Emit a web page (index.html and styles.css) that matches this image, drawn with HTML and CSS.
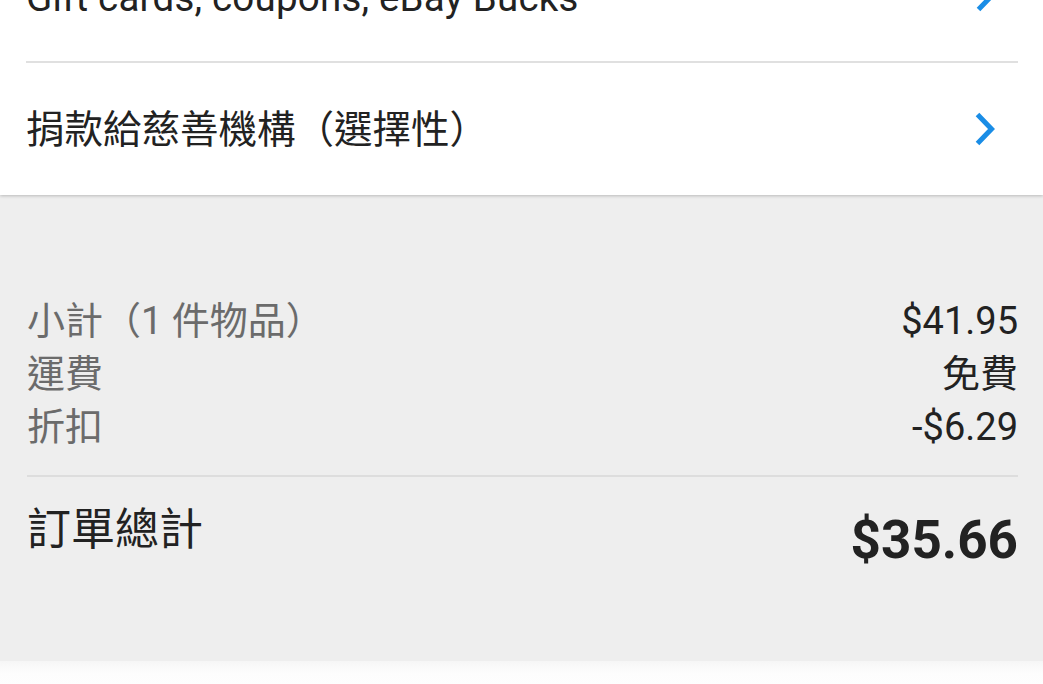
FILE: index.html
```html
<!DOCTYPE html>
<html lang="zh-Hant">
<head>
<meta charset="utf-8">
<link rel="stylesheet" href="styles.css">
</head>
<body>
<div class="card">
  <div class="row row-first">
    <span class="row-text row-text-first">Gift cards, coupons, eBay Bucks</span>
    <svg class="chev" viewBox="0 0 20 34" width="20" height="34"><path d="M2.5 2.5 L16.5 17 L2.5 31.5" fill="none" stroke="#1a8de6" stroke-width="5"/></svg>
  </div>
  <div class="row">
    <span class="row-text">捐款給慈善機構（選擇性）</span>
    <svg class="chev" viewBox="0 0 20 34" width="20" height="34"><path d="M2.5 2.5 L16.5 17 L2.5 31.5" fill="none" stroke="#1a8de6" stroke-width="5"/></svg>
  </div>
</div>
<div class="summary">
  <div class="lines">
    <div class="line"><span class="label">小計（1 件物品）</span><span class="value">$41.95</span></div>
    <div class="line"><span class="label">運費</span><span class="value">免費</span></div>
    <div class="line"><span class="label">折扣</span><span class="value">-$6.29</span></div>
  </div>
  <div class="total">
    <span class="total-label">訂單總計</span>
    <span class="total-value">$35.66</span>
  </div>
</div>
<div class="footer"></div>
</body>
</html>
```
FILE: styles.css
```css
html, body {
  margin: 0;
  padding: 0;
  background: #eeeeee;
  font-family: Roboto, "Noto Sans CJK TC", sans-serif;
  overflow: hidden;
}
.card {
  background: #ffffff;
  margin-top: -72px;
  padding: 0 26px 0 26px;
  box-shadow: 0 1px 3px rgba(0,0,0,0.22);
  position: relative;
  z-index: 1;
}
.row {
  height: 132px;
  display: flex;
  align-items: center;
  justify-content: space-between;
  padding-right: 22px;
}
.row-first {
  height: 133px;
  border-bottom: 2px solid #e0e0e0;
  margin-right: -1px;
}
.row-text {
  font-size: 38.5px;
  color: #222222;
  position: relative;
  top: -3px;
}
.row-text-first {
  top: 3px;
  letter-spacing: 0.2px;
}
.chev {
  display: block;
}
.summary {
  padding: 100px 25px 0 27px;
  height: 366px;
}
.line {
  display: flex;
  justify-content: space-between;
  height: 53px;
  line-height: 53px;
  font-size: 38px;
}
.label {
  color: #6b6b6b;
}
.value {
  color: #222222;
}
.lines {
  padding-bottom: 21px;
  border-bottom: 2px solid #dddddd;
}
.total {
  display: flex;
  justify-content: space-between;
  align-items: flex-start;
  padding-top: 23px;
}
.total-label {
  font-size: 44px;
  line-height: 60px;
  color: #222222;
}
.total-value {
  font-size: 53px;
  font-weight: bold;
  line-height: 60px;
  margin-top: 10px;
  color: #222222;
}
.footer {
  background: linear-gradient(#f6f6f6, #fdfdfd 12px, #ffffff);
  height: 40px;
}
```
